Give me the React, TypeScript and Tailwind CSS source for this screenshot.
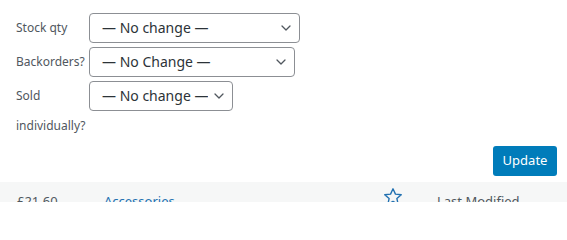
import type React from "react";

const FONT = { fontFamily: '"Noto Sans", "Open Sans", sans-serif' };

function Chevron(): React.JSX.Element {
  return (
    <svg
      aria-hidden="true"
      viewBox="0 0 20 20"
      className="pointer-events-none absolute right-[6px] top-1/2 size-[16px] -translate-y-1/2 text-[#50575e]"
    >
      <path
        d="M5 7.5l5 5 5-5"
        fill="none"
        stroke="currentColor"
        strokeWidth="1.6"
        strokeLinecap="round"
        strokeLinejoin="round"
      />
    </svg>
  );
}

function FakeSelect({
  value,
  width,
}: {
  value: string;
  width: string;
}): React.JSX.Element {
  return (
    <div className={`relative h-[30px] ${width}`}>
      <select
        defaultValue={value}
        className="h-full w-full appearance-none rounded-[4px] border border-[#8c8f94] bg-white pl-3 pr-6 text-[14px] leading-[28px] text-[#2c3338] outline-none"
        style={FONT}
      >
        <option>{value}</option>
      </select>
      <Chevron />
    </div>
  );
}

function Field({
  label,
  value,
  width,
}: {
  label: string;
  value: string;
  width: string;
}): React.JSX.Element {
  return (
    <div className="flex items-start">
      <span className="w-[73px] shrink-0 pr-1 text-[12px] leading-[30px] text-[#50575e]">
        {label}
      </span>
      <FakeSelect value={value} width={width} />
    </div>
  );
}

export default function App(): React.JSX.Element {
  return (
    <div className="h-[202px] w-[567px] overflow-hidden bg-white" style={FONT}>
      <div className="flex flex-col gap-[4px] pl-4 pt-[13px]">
        <Field label="Stock qty" value="— No change —" width="w-[211px]" />
        <Field label="Backorders?" value="— No Change —" width="w-[206px]" />
        <Field
          label="Sold individually?"
          value="— No change —"
          width="w-[144px]"
        />
      </div>

      <div className="flex justify-end pr-[10px] pt-[5px]">
        <button
          type="button"
          className="h-[30px] w-[64px] rounded-[3px] bg-[#007cba] text-[13px] text-white"
        >
          Update
        </button>
      </div>

      <div className="mt-[6px] flex h-[40px] items-start bg-[#f6f7f7] pt-[9px] text-[13px] leading-[20px] text-[#50575e]">
        <span className="w-[87px] pl-[17px]">£21.60</span>
        <span className="w-[132px] pl-[17px] text-[#2271b1]">Accessories</span>
        <span className="w-[147px] pl-[17px]">–</span>
        <span className="flex w-[71px] pl-[17px]">
          <svg
            aria-hidden="true"
            viewBox="0 0 20 20"
            className="-mt-[4px] size-[20px] text-[#2271b1]"
          >
            <path
              d="M10 1.8l2.45 5.3 5.8.6-4.35 3.9 1.25 5.7L10 14.4l-5.15 2.9 1.25-5.7L1.75 7.7l5.8-.6z"
              fill="none"
              stroke="currentColor"
              strokeWidth="1.4"
              strokeLinejoin="round"
            />
          </svg>
        </span>
        <span>Last Modified</span>
      </div>
    </div>
  );
}
